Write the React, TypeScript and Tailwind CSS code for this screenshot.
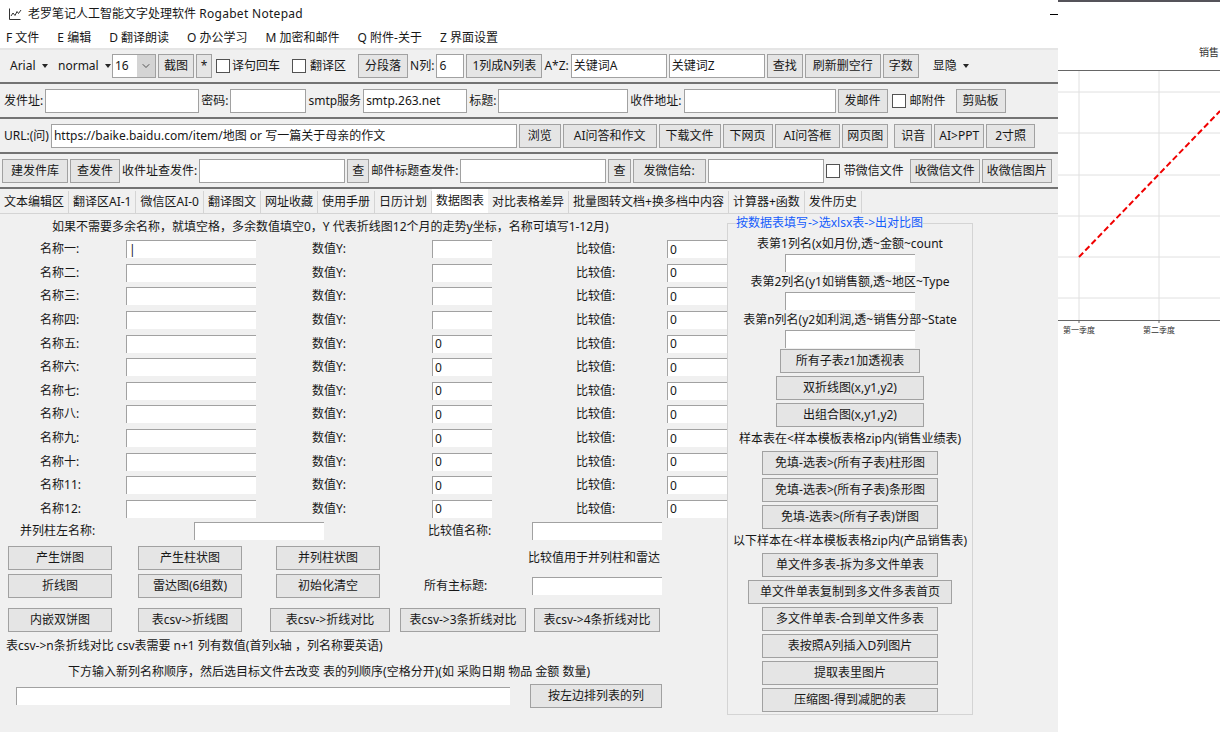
import { ReactNode } from "react";
import { ChevronDown } from "lucide-react";

const names = ["一", "二", "三", "四", "五", "六", "七", "八", "九", "十", "11", "12"];
const tabs = ["文本编辑区", "翻译区AI-1", "微信区AI-0", "翻译图文", "网址收藏", "使用手册", "日历计划", "数据图表", "对比表格差异", "批量图转文档+换多档中内容", "计算器+函数", "发件历史"];
const menus = ["F 文件", "E 编辑", "D 翻译朗读", "O 办公学习", "M 加密和邮件", "Q 附件-关于", "Z 界面设置"];

const Btn = ({ children, className = "px-1.5" }: { children: ReactNode; className?: string }) => (
  <button className={`flex h-6 shrink-0 items-center justify-center whitespace-nowrap border border-neutral-400 bg-neutral-200 ${className}`}>
    {children}
  </button>
);

// toolbar field, full grey border
const Field = ({ value = "", className = "w-24" }: { value?: string; className?: string }) => (
  <div className={`flex h-6 shrink-0 items-center border border-neutral-400 bg-white px-0.5 whitespace-nowrap ${className}`}>{value}</div>
);

// form field, sunken top and left edge only
const Cell = ({ value = "", className = "" }: { value?: string; className?: string }) => (
  <div className={`flex h-4.5 items-center border-t border-l border-neutral-400 bg-white pl-0.5 ${className}`}>{value}</div>
);

const Check = ({ className = "" }: { className?: string }) => <span className={`size-3.5 shrink-0 border border-neutral-600 bg-white ${className}`} />;
const Arrow = () => <span className="ml-1.5 border-x-[3px] border-t-4 border-x-transparent border-t-neutral-800" />;

const Row = ({ children, className = "" }: { children: ReactNode; className?: string }) => (
  <div className={`mb-px flex h-8.5 items-center gap-0.5 whitespace-nowrap border-b-2 border-neutral-500 ${className}`}>{children}</div>
);

const Chart = () => (
  <svg width="162" height="732" className="block">
    <rect x="0" y="0" width="162" height="2" fill="#55535a" />
    <text x="141" y="56" fontSize="10" fill="#333">销售</text>
    {[92, 133, 175, 216, 257, 298].map((y) => (
      <line key={y} x1="0" x2="162" y1={y} y2={y} stroke="#e0e0e0" />
    ))}
    {[21, 101].map((x) => (
      <g key={x}>
        <line x1={x} x2={x} y1="70" y2="320" stroke="#e0e0e0" />
        <line x1={x} x2={x} y1="320" y2="323" stroke="#666" />
      </g>
    ))}
    <line x1="0" x2="162" y1="70.5" y2="70.5" stroke="#666" />
    <line x1="0" x2="162" y1="320.5" y2="320.5" stroke="#666" />
    <line x1="21" y1="257" x2="162" y2="111" stroke="#f00000" strokeWidth="2" strokeDasharray="6 3" />
    <text x="5" y="333" fontSize="8" fill="#333">第一季度</text>
    <text x="85" y="333" fontSize="8" fill="#333">第二季度</text>
  </svg>
);

export default function App() {
  return (
    <div className="flex h-[732px] w-[1220px] overflow-hidden bg-white text-xs text-neutral-900" style={{ fontFamily: '"Noto Sans", "Noto Sans CJK SC", sans-serif' }}>
      <div className="w-[1058px] shrink-0">
        <div className="flex h-7 items-center pl-2">
          <svg width="14" height="14" viewBox="0 0 14 14" fill="none" stroke="#333" strokeWidth="1" className="mr-1.5">
            <path d="M1.5 1.5v11h11" />
            <path d="M3 9l2-3 2 2.5 2-4 1.5 2L13 3" />
          </svg>
          <span>老罗笔记人工智能文字处理软件 <span className="tracking-wide">Rogabet Notepad</span></span>
          <span className="ml-auto h-px w-2 bg-black" />
        </div>
        <div className="flex h-5 items-center gap-4.5 pl-1.5">
          {menus.map((m) => (
            <span key={m}>{m}</span>
          ))}
        </div>

        <div className="h-[684px] bg-[#f0f0f0]">
          <div className="border-t-2 border-neutral-200">
            <Row className="pl-2.5">
              <span className="flex w-11.5 items-center">Arial<Arrow /></span>
              <span className="flex w-13 items-center">normal<Arrow /></span>
              <div className="flex h-6 w-11 shrink-0 items-center justify-between border border-neutral-400 bg-white pl-0.5">
                16
                <span className="flex h-full w-4.5 items-center justify-center bg-neutral-300 text-neutral-600"><ChevronDown size={12} /></span>
              </div>
              <Btn className="w-9">截图</Btn>
              <Btn className="w-4">*</Btn>
              <Check className="ml-0.5" />
              <span>译句回车</span>
              <Check className="ml-2.5" />
              <span className="ml-0.5">翻译区</span>
              <Btn className="ml-2.5 w-12.5">分段落</Btn>
              <span>N列:</span>
              <Field value="6" className="w-7" />
              <Btn className="w-19">1列成N列表</Btn>
              <span>A*Z:</span>
              <Field value="关键词A" />
              <Field value="关键词Z" />
              <Btn className="w-9">查找</Btn>
              <Btn className="w-19">刷新删空行</Btn>
              <Btn className="w-9">字数</Btn>
              <span className="ml-3 flex items-center">显隐<Arrow /></span>
            </Row>
            <Row className="pl-1">
              <span>发件址:</span>
              <Field className="w-38.5" />
              <span>密码:</span>
              <Field className="w-19" />
              <span>smtp服务</span>
              <Field value="smtp.263.net" className="w-26" />
              <span>标题:</span>
              <Field className="w-32.5" />
              <span>收件地址:</span>
              <Field className="w-38" />
              <Btn>发邮件</Btn>
              <Check className="ml-0.5" />
              <span className="ml-0.5">邮附件</span>
              <Btn className="ml-2 px-1.5">剪贴板</Btn>
            </Row>
            <Row className="pl-1 pr-[23px]">
              <span>URL:(问)</span>
              <Field value="https://baike.baidu.com/item/地图 or 写一篇关于母亲的作文" className="min-w-0 flex-1" />
              <Btn className="px-2">浏览</Btn>
              <Btn className="px-2.5">AI问答和作文</Btn>
              <Btn className="px-1.5">下载文件</Btn>
              <Btn className="px-1.5">下网页</Btn>
              <Btn className="px-2">AI问答框</Btn>
              <Btn className="px-1">网页图</Btn>
              <Btn className="ml-1 px-1.5">识音</Btn>
              <Btn className="px-1">AI&gt;PPT</Btn>
              <Btn className="px-2">2寸照</Btn>
            </Row>
            <Row className="pl-0.5">
              <Btn className="px-2">建发件库</Btn>
              <Btn>查发件</Btn>
              <span>收件址查发件:</span>
              <Field className="w-36.5" />
              <Btn className="px-1">查</Btn>
              <span>邮件标题查发件:</span>
              <Field className="w-36.5" />
              <Btn className="px-1">查</Btn>
              <Btn className="px-2.5">发微信给:</Btn>
              <Field className="w-29" />
              <Check />
              <span className="ml-0.5">带微信文件</span>
              <Btn className="ml-1 px-1">收微信文件</Btn>
              <Btn className="px-1">收微信图片</Btn>
            </Row>
          </div>

          <div className="flex h-6 items-end border-b border-neutral-300">
            {tabs.map((t) => (
              <span key={t} className={t === "数据图表" ? "flex h-6 items-center bg-white px-1" : "flex h-5.5 items-center border-r border-neutral-300 px-1"}>
                {t}
              </span>
            ))}
          </div>

          <div className="flex pt-px">
            <div className="w-[727px] shrink-0">
              <div className="flex h-6 items-center pl-13">如果不需要多余名称，就填空格，多余数值填空0，Y 代表折线图12个月的走势y坐标，名称可填写1-12月)</div>
              <div className="mt-px flex h-69.5 flex-col justify-between">
                {names.map((n, i) => (
                  <div key={n} className="grid h-4.5 grid-cols-[126px_130px_176px_60px_175px_60px] items-center">
                    <span className="pl-10">名称{n}:</span>
                    <Cell value={i === 0 ? "|" : ""} />
                    <span className="pl-14">数值Y:</span>
                    <Cell value={i > 3 ? "0" : ""} />
                    <span className="pl-21">比较值:</span>
                    <Cell value="0" />
                  </div>
                ))}
              </div>
              <div className="mt-1 flex h-4.5 items-center pl-5">
                <span className="w-43.5">并列柱左名称:</span>
                <Cell className="w-32.5" />
                <span className="ml-26 w-26">比较值名称:</span>
                <Cell className="w-32.5" />
              </div>
              <div className="mt-1.5 flex items-center pl-2">
                <Btn className="w-26">产生饼图</Btn>
                <Btn className="ml-6.5 w-26">产生柱状图</Btn>
                <Btn className="ml-8.5 w-26">并列柱状图</Btn>
                <span className="ml-37">比较值用于并列柱和雷达</span>
              </div>
              <div className="mt-1 flex items-center pl-2">
                <Btn className="w-26">折线图</Btn>
                <Btn className="ml-6.5 w-26">雷达图(6组数)</Btn>
                <Btn className="ml-8.5 w-26">初始化清空</Btn>
                <span className="ml-11 w-27">所有主标题:</span>
                <Cell className="w-32.5" />
              </div>
              <div className="mt-2.5 flex items-center pl-2">
                <Btn className="w-26">内嵌双饼图</Btn>
                <Btn className="ml-6.5 w-26">表csv-&gt;折线图</Btn>
                <Btn className="ml-7 w-30">表csv-&gt;折线对比</Btn>
                <Btn className="ml-2.5 w-31.5">表csv-&gt;3条折线对比</Btn>
                <Btn className="ml-2 w-31.5">表csv-&gt;4条折线对比</Btn>
              </div>
              <div className="flex h-7 items-center pl-1.5">表csv-&gt;n条折线对比 csv表需要 n+1 列有数值(首列x轴 ，列名称要英语)</div>
              <div className="flex h-6 items-center pl-17">下方输入新列名称顺序，然后选目标文件去改变 表的列顺序(空格分开)(如 采购日期 物品 金额 数量)</div>
              <div className="flex items-center pl-4">
                <Cell className="w-[494px]" />
                <Btn className="ml-5 w-33">按左边排列表的列</Btn>
              </div>
            </div>

            <fieldset className="w-61.5 shrink-0 border border-neutral-300">
              <legend className="ml-2 leading-4 text-blue-600">按数据表填写-&gt;选xlsx表-&gt;出对比图</legend>
              <div className="flex flex-col items-center gap-0.75">
                <div className="-mb-0.5 flex flex-col items-center pt-0.75">
                  <span className="flex h-5 items-center">表第1列名(x如月份,透~金额~count</span>
                  <Cell className="w-32.5" />
                  <span className="flex h-5 items-center">表第2列名(y1如销售额,透~地区~Type</span>
                  <Cell className="w-32.5" />
                  <span className="flex h-5 items-center">表第n列名(y2如利润,透~销售分部~State</span>
                  <Cell className="w-32.5" />
                </div>
                <Btn className="w-35">所有子表z1加透视表</Btn>
                <Btn className="w-37">双折线图(x,y1,y2)</Btn>
                <Btn className="w-37">出组合图(x,y1,y2)</Btn>
                <span className="flex h-4.5 items-center whitespace-nowrap">样本表在&lt;样本模板表格zip内(销售业绩表)</span>
                <Btn className="w-44">免填-选表&gt;(所有子表)柱形图</Btn>
                <Btn className="w-44">免填-选表&gt;(所有子表)条形图</Btn>
                <Btn className="w-44">免填-选表&gt;(所有子表)饼图</Btn>
                <span className="flex h-4.5 items-center whitespace-nowrap">以下样本在&lt;样本模板表格zip内(产品销售表)</span>
                <Btn className="w-44">单文件多表-拆为多文件单表</Btn>
                <Btn className="w-51">单文件单表复制到多文件多表首页</Btn>
                <Btn className="w-44">多文件单表-合到单文件多表</Btn>
                <Btn className="w-44">表按照A列插入D列图片</Btn>
                <Btn className="w-44">提取表里图片</Btn>
                <Btn className="mb-0.5 w-44">压缩图-得到减肥的表</Btn>
              </div>
            </fieldset>
          </div>
        </div>
      </div>
      <Chart />
    </div>
  );
}
